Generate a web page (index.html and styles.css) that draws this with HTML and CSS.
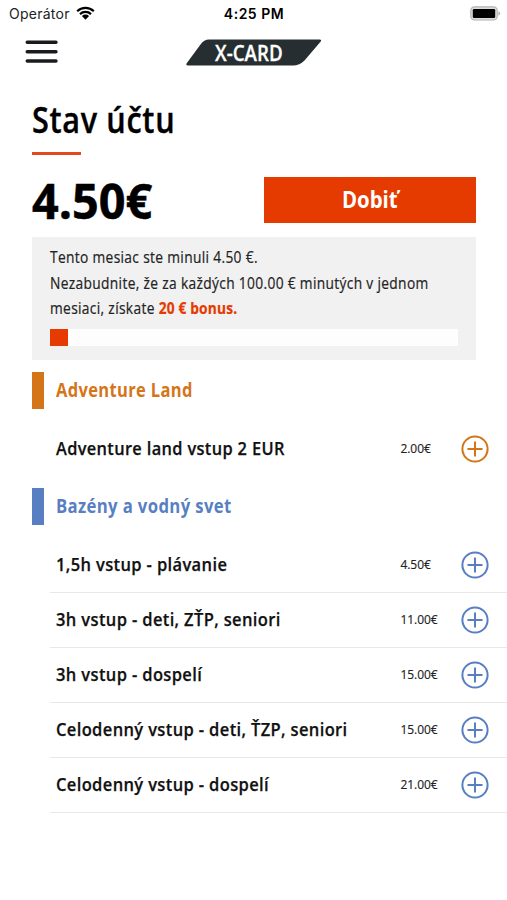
FILE: index.html
```html
<!DOCTYPE html>
<html lang="sk">
<head>
<meta charset="utf-8">
<title>X-CARD</title>
<link rel="stylesheet" href="styles.css">
</head>
<body>
<svg width="0" height="0" class="defs" aria-hidden="true">
  <symbol id="plus" viewBox="0 0 28 28"><circle cx="14" cy="14" r="12.6"/><path d="M14 7.2v13.6M7.2 14h13.6"/></symbol>
</svg>
<div class="status">
  <div class="carrier"><span>Operátor</span>
    <svg class="wifi" width="19" height="14" viewBox="0 0 19 14"><path d="M1.2 5.2a12 12 0 0 1 16.6 0M4 8.1a8 8 0 0 1 11 0" fill="none" stroke="#000" stroke-width="2.2"/><path d="M5.9 10a5.2 5.2 0 0 1 7.2 0l-3.6 3.7z"/></svg>
  </div>
  <div class="time">4:25 PM</div>
  <svg class="battery" width="31" height="15" viewBox="0 0 31 15"><rect x=".8" y=".8" width="26.4" height="13.2" rx="3.6" fill="#ddd" stroke="#b4b4b4" stroke-width="1.2"/><rect x="2.8" y="3" width="22.4" height="9" rx="1.2"/><path d="M28.4 5.3c2.4.9 2.4 3.5 0 4.4z" fill="#b4b4b4"/></svg>
</div>
<header class="topbar">
  <svg class="burger" width="33" height="26" viewBox="0 0 33 26"><path d="M2.200 3.200h28.800M2.200 12.700h28.800M2.200 22h28.800" stroke="#191b1e" stroke-width="3.400" stroke-linecap="round"/></svg>
  <div class="logo">
    <svg width="136" height="27" viewBox="0 0 136 27"><path d="M23 .5H133.500Q136 .5 134.700 2.600L118.500 21.500Q113.500 26.500 107 26.500H2Q-.5 26.500.7 24.300L14.500 5.500Q18 .5 23 .5Z" fill="#262e31"/></svg>
    <span>X-CARD</span>
  </div>
</header>
<main>
  <section class="account">
    <h1>Stav účtu</h1>
    <div class="rule"></div>
    <div class="balance"><strong>4.50€</strong><button><span>Dobiť</span></button></div>
    <div class="info">
      <p>Tento mesiac ste minuli 4.50 €.<br>Nezabudnite, že za každých 100.00 € minutých v jednom<br>mesiaci, získate <b>20 € bonus.</b></p>
      <div class="progress"><div></div></div>
    </div>
  </section>
  <section class="group adventure">
    <h2><span>Adventure Land</span></h2>
    <ul>
      <li><span class="name">Adventure land vstup 2 EUR</span><span class="price">2.00€</span><svg class="add"><use href="#plus"/></svg></li>
    </ul>
  </section>
  <section class="group pool">
    <h2><span>Bazény a vodný svet</span></h2>
    <ul>
      <li><span class="name">1,5h vstup - plávanie</span><span class="price">4.50€</span><svg class="add"><use href="#plus"/></svg></li>
      <li><span class="name">3h vstup - deti, ZŤP, seniori</span><span class="price">11.00€</span><svg class="add"><use href="#plus"/></svg></li>
      <li><span class="name">3h vstup - dospelí</span><span class="price">15.00€</span><svg class="add"><use href="#plus"/></svg></li>
      <li><span class="name">Celodenný vstup - deti, ŤZP, seniori</span><span class="price">15.00€</span><svg class="add"><use href="#plus"/></svg></li>
      <li><span class="name">Celodenný vstup - dospelí</span><span class="price">21.00€</span><svg class="add"><use href="#plus"/></svg></li>
    </ul>
  </section>
</main>
</body>
</html>
```
FILE: styles.css
```css
* { box-sizing: border-box; margin: 0; padding: 0; }
body { background: #fff; color: #000; font-family: "Open Sans", sans-serif; white-space: nowrap; overflow: hidden; }
.defs { position: absolute; }

.status { display: grid; grid-template-columns: 1fr auto 1fr; align-items: center; height: 27px; padding: 0 6px 0 9px; font: 400 14px/27px Inter, sans-serif; }
.carrier { display: flex; align-items: center; gap: 6px; color: #222; letter-spacing: .25px; }
.wifi { margin-top: -2px; }
.time { font-weight: 600; letter-spacing: .5px; margin-left: -2px; }
.battery { justify-self: end; }

.topbar { display: grid; grid-template-columns: 1fr auto 1fr; height: 53px; padding: 12px 25px 0; }
.logo { display: grid; height: 27px; }
.logo > * { grid-area: 1 / 1; }
.logo span { justify-self: center; color: #fff; font-size: 21.500px; font-weight: 600; line-height: 27px; margin-right: 10px; transform: scaleX(.87); -webkit-text-stroke: .3px; }

.account { padding: 20px 31px 0 32px; }
h1 { font-size: 36px; font-weight: 600; line-height: 40px; letter-spacing: .8px; transform: scaleX(.85); transform-origin: left; -webkit-text-stroke: .4px; }
.rule { width: 49px; height: 2.500px; margin-top: 12px; background: #e04a20; }
.balance { display: flex; justify-content: space-between; height: 46px; margin-top: 22.500px; }
.balance strong { font-size: 48px; font-weight: 700; line-height: 48px; transform: scaleX(.975); transform-origin: left; -webkit-text-stroke: .5px; }
button { width: 212.500px; height: 46px; border: 0; background: #e63b00; color: #fff; font: 700 24px/44px "Open Sans", sans-serif; padding-bottom: 2px; }
button span { display: inline-block; transform: scaleX(.85); }
.info { height: 123px; margin-top: 14px; padding: 8px 18px 0; background: #f1f1f1; }
.info p { font-size: 16px; line-height: 25.500px; letter-spacing: .4px; color: #222; transform: scaleX(.859); transform-origin: left; -webkit-text-stroke: .2px; }
.info b { color: #e63b00; letter-spacing: .2px; }
.progress { height: 17px; margin-top: 7.500px; background: #fdfdfd; }
.progress div { width: 18px; height: 17px; background: #e63b00; }

.group { margin-top: 12px; }
.group h2 { height: 37px; margin-left: 32px; padding-left: 12px; border-left: 12px solid; font-size: 19px; font-weight: 700; line-height: 37px; letter-spacing: .4px; }
.group h2 span { display: inline-block; transform: scaleX(.868); transform-origin: left; }
.group ul { list-style: none; padding: 12px 0 0 50px; }
.group li { display: grid; grid-template-columns: 344.500px 60px 28px; align-items: center; height: 55px; padding-left: 6px; }
.name { font-size: 18.500px; font-weight: 600; letter-spacing: .4px; color: #111; padding-bottom: 3px; transform: scaleX(.885); transform-origin: left; -webkit-text-stroke: .25px; }
.price { font-size: 12px; color: #222; letter-spacing: -.08px; -webkit-text-stroke: .15px; }
.add { width: 28px; height: 28px; fill: none; stroke: currentColor; stroke-width: 2; stroke-linecap: round; }
.adventure h2, .adventure .add { color: #d57519; }
.pool h2, .pool .add { color: #587fc2; }
.pool h2 span { transform: scaleX(.88); }
.pool ul { padding-top: 13px; }
.pool .name { transform: scaleX(.893); }
.pool .price { padding-bottom: 2px; }
.pool li { border-bottom: 1px solid #e8e8e8; }
```
